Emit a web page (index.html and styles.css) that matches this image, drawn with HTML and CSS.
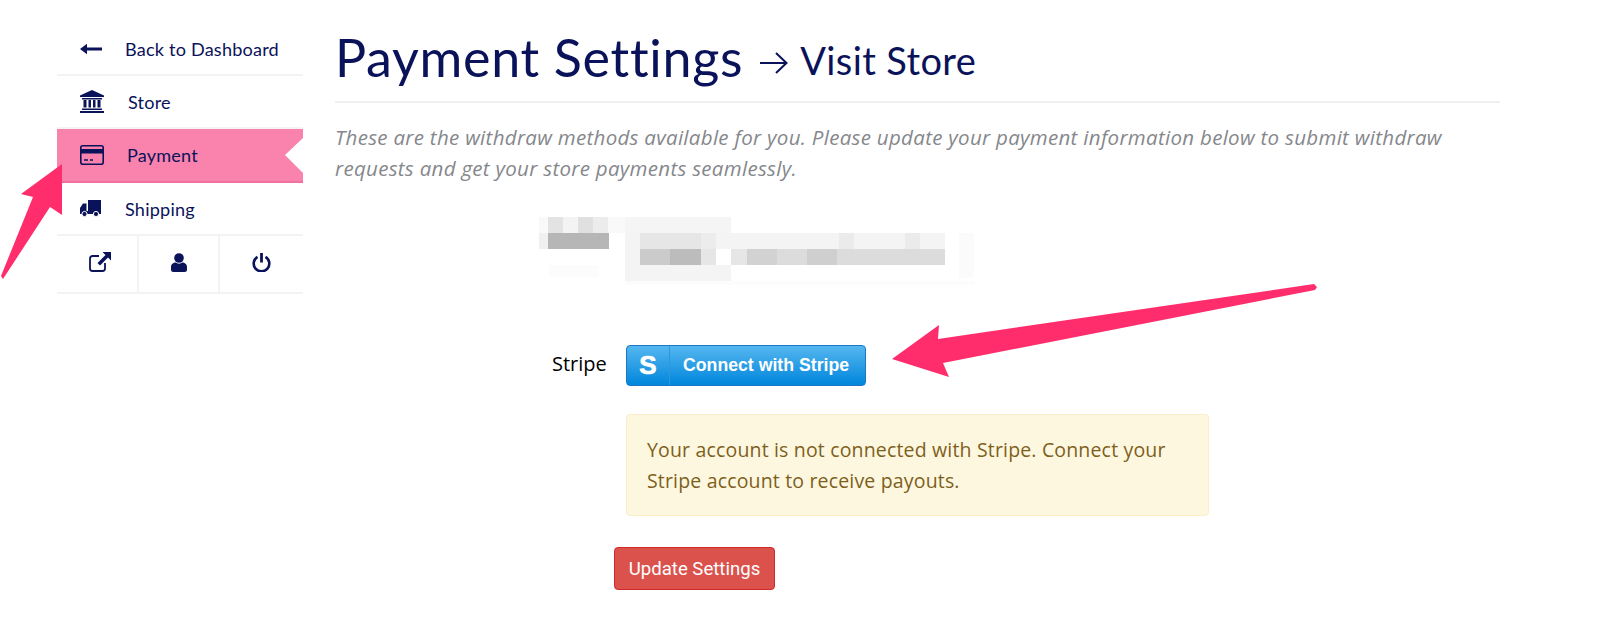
FILE: index.html
```html
<!DOCTYPE html>
<html lang="en">
<head>
<meta charset="utf-8">
<title>Payment Settings</title>
<link rel="stylesheet" href="styles.css">
</head>
<body>
<div class="page">
  <aside class="side">
    <a class="item item-first"><span class="ico"><svg width="22" height="12" viewBox="0 0 22 12"><path d="M0 6 7 .8V4.4H22V7.6H7V11.2Z" fill="#0a1259"/></svg></span><span class="lbl">Back to Dashboard</span></a>
    <a class="item"><span class="ico ico-store"><svg width="24" height="23" viewBox="0 0 24 23"><path d="M12 0 24 5.500V7H0V5.500ZM2 8H22V9.500H2ZM3.500 10H6.500V17.500H3.500ZM8.500 10H11V17.500H8.500ZM13 10H15.500V17.500H13ZM17.500 10H20.500V17.500H17.500ZM2 18.500H22V20H2ZM0 21H24V23H0Z" fill="#0a1259"/></svg></span><span class="lbl">Store</span></a>
    <a class="item item-active"><span class="ico ico-pay"><svg width="24" height="20" viewBox="0 0 24 20"><rect x=".8" y=".8" width="22.400" height="18.400" rx="2" fill="none" stroke="#0a1259" stroke-width="1.600"/><rect x="1" y="4" width="22" height="4.500" fill="#0a1259"/><path d="M4 15H8M10 15H13" stroke="#0a1259" stroke-width="1.300"/></svg></span><span class="lbl">Payment</span></a>
    <a class="item"><span class="ico"><svg width="21" height="17" viewBox="0 0 21 17"><path d="M8 0H21V13.500H8ZM6.500 3.500V11H0V8L3 3.500Z" fill="#0a1259"/><path d="M0 11H21V14H0Z" fill="#0a1259"/><circle cx="4.500" cy="14" r="2.600" fill="#0a1259" stroke="#fff"/><circle cx="16" cy="14" r="2.600" fill="#0a1259" stroke="#fff"/></svg></span><span class="lbl">Shipping</span></a>
    <div class="tools">
      <span class="tool tool-link"><svg width="22" height="20" viewBox="0 0 22 20"><path d="M16 11V16.500A2.500 2.500 0 0 1 13.500 19H3.500A2.500 2.500 0 0 1 1 16.500V6.500A2.500 2.500 0 0 1 3.500 4H10" fill="none" stroke="#0a1259" stroke-width="1.800"/><path d="M13.500 0H22V8.500L19 5.500 11 13.500 8.500 11 16.500 3Z" fill="#0a1259"/></svg></span>
      <span class="tool"><svg width="16" height="19" viewBox="0 0 16 19"><circle cx="8" cy="5" r="4.800" fill="#0a1259"/><path d="M0 16.500V14C0 11 2.500 9.500 4.500 9.500 6.500 11 9.500 11 11.500 9.500 13.500 9.500 16 11 16 14V16.500A2.500 2.500 0 0 1 13.500 19H2.500A2.500 2.500 0 0 1 0 16.500Z" fill="#0a1259"/></svg></span>
      <span class="tool"><svg width="19" height="19" viewBox="0 0 19 19"><path d="M5.500 3.800A7.800 7.800 0 1 0 13.500 3.800" fill="none" stroke="#0a1259" stroke-width="2.600"/><path d="M9.500 0V9.500" stroke="#0a1259" stroke-width="2.800"/></svg></span>
    </div>
  </aside>
  <main class="main">
    <header class="head">
      <h1 class="title">Payment Settings</h1>
      <svg class="visit-arrow" width="28" height="24" viewBox="0 0 28 24"><path d="M0 12H26M16 2 26.500 12 16 22" fill="none" stroke="#0a1259" stroke-width="2"/></svg>
      <a class="visit">Visit Store</a>
    </header>
    <p class="intro">These are the withdraw methods available for you. Please update your payment information below to submit withdraw requests and get your store payments seamlessly.</p>
    <div class="mosaic">
      <svg width="440" height="76" viewBox="0 0 440 76">
        <rect x="0" y="0" width="192" height="16" fill="#f9f9f9"/><rect x="9" y="0" width="15" height="16" fill="#e3e3e3"/><rect x="39" y="0" width="15" height="16" fill="#e0e0e0"/><rect x="24" y="0" width="15" height="16" fill="#f3f3f3"/><rect x="54" y="0" width="15" height="16" fill="#ececec"/><rect x="86" y="0" width="106" height="16" fill="#f5f5f5"/>
        <rect x="0" y="16" width="9" height="16" fill="#f0f0f0"/><rect x="9" y="16" width="61" height="16" fill="#b6b6b6"/>
        <rect x="86" y="16" width="106" height="48" fill="#f4f4f4"/><rect x="101" y="16" width="61" height="16" fill="#e6e6e6"/><rect x="162" y="16" width="15" height="16" fill="#ececec"/><rect x="192" y="16" width="214" height="16" fill="#f4f4f4"/><rect x="300" y="16" width="15" height="16" fill="#ebebeb"/><rect x="366" y="16" width="15" height="16" fill="#ebebeb"/>
        <rect x="101" y="32" width="61" height="16" fill="#cbcbcb"/><rect x="131" y="32" width="31" height="16" fill="#bcbcbc"/><rect x="162" y="32" width="15" height="16" fill="#e6e6e6"/><rect x="177" y="32" width="15" height="16" fill="#ffffff"/>
        <rect x="192" y="32" width="214" height="16" fill="#dcdcdc"/><rect x="192" y="32" width="16" height="16" fill="#e6e6e6"/><rect x="208" y="32" width="30" height="16" fill="#d2d2d2"/><rect x="268" y="32" width="30" height="16" fill="#cfcfcf"/>
        <rect x="10" y="48" width="50" height="12" fill="#fcfcfc"/><rect x="86" y="64" width="350" height="4" fill="#fcfcfc"/><rect x="420" y="16" width="15" height="45" fill="#fbfbfb"/>
      </svg>
    </div>
    <div class="stripe-row">
      <span class="stripe-label">Stripe</span>
      <a class="stripe-btn"><span class="stripe-s">S</span><span class="stripe-text">Connect with Stripe</span></a>
    </div>
    <div class="notice">Your account is not connected with Stripe. Connect your Stripe account to receive payouts.</div>
    <button class="update" type="button">Update Settings</button>
  </main>
</div>
<svg class="arrow-a" width="70" height="125" viewBox="0 155 70 125"><path d="M62 164 21 194 33 197 1 276 3 279 50 207 62 215Z" fill="#ff2d6b"/></svg>
<svg class="arrow-b" width="440" height="110" viewBox="885 275 440 110"><path d="M892 359 939 325 938 339 1314 284 1317 287 1315 290 943 363 949 377Z" fill="#ff2d6b"/></svg>
</body>
</html>
```
FILE: styles.css
```css
* { box-sizing: border-box; }
html, body { margin: 0; padding: 0; background: #fff; }
body { font-family: "Lato", "Liberation Sans", sans-serif; color: #0a1259; overflow: hidden; height: 622px; position: relative; }
.page { display: flex; align-items: flex-start; padding-left: 57px; }

.side { width: 246px; flex: none; padding-top: 24px; }
.item { display: flex; align-items: center; height: 53px; padding-left: 23px; font-size: 18.100px; letter-spacing: .2px; border-bottom: 2px solid #f3f3f3; color: #0a1259; }
.item-first { height: 52px; }
.ico { width: 45px; flex: none; display: flex; align-items: center; }
.ico-store { width: 48px; }
.ico-pay { width: 47px; }
.item-active { height: 54px; background: #f983ad; border-bottom-color: #f0709f; clip-path: polygon(0 0, 100% 0, 100% 9px, 228px 26px, 100% 44px, 100% 100%, 0 100%); }
.tools { display: grid; grid-template-columns: 82px 81px 83px; height: 58px; border-bottom: 2px solid #f3f3f3; }
.tool { display: flex; align-items: center; justify-content: center; border-right: 2px solid #f3f3f3; padding-bottom: 4px; }
.tool-link { padding-left: 6px; }
.tool:last-child { border-right: 0; }

.main { width: 1165px; margin-left: 32px; flex: none; }
.head { display: flex; align-items: baseline; height: 103px; padding-top: 24px; border-bottom: 2px solid #f0f0f0; }
.title { margin: 0; font-size: 52px; line-height: 66px; font-weight: 400; letter-spacing: .7px; color: #0a1259; }
.visit-arrow { flex: none; margin-left: 17px; align-self: flex-start; margin-top: 27px; }
.visit { font-size: 38px; margin-left: 12px; color: #0a1259; letter-spacing: .4px; position: relative; top: -2px; }
.intro { margin: 19px 0 0; width: 1110px; font-family: "Open Sans", sans-serif; font-size: 20.500px; line-height: 31px; letter-spacing: .3px; font-style: italic; color: #85878c; }

.mosaic { margin: 33px 0 0 204px; height: 76px; line-height: 0; }
.stripe-row { display: flex; align-items: center; margin: 52px 0 0 217px; color: #000; }
.stripe-label { width: 74px; font-family: "Open Sans", sans-serif; font-size: 20px; padding-bottom: 5px; }
.stripe-btn { display: flex; align-items: center; width: 240px; height: 41px; border-radius: 4px; background: linear-gradient(#55b6ef, #0086dc); border: 1px solid #1a78c4; color: #fff; font-family: "Liberation Sans", sans-serif; font-weight: 700; }
.stripe-s { width: 43px; flex: none; height: 100%; display: flex; align-items: center; justify-content: center; border-right: 1px solid #2f95dc; font-size: 26px; -webkit-text-stroke: .7px #fff; }
.stripe-text { font-size: 17.700px; margin-left: 13px; }
.notice { margin: 28px 0 0 291px; width: 583px; height: 102px; padding: 19px 20px; background: #fdf7e0; border: 1px solid #fbeec6; border-radius: 4px; color: #7d5f1c; font-family: "Open Sans", sans-serif; font-size: 19.500px; letter-spacing: .17px; line-height: 31px; }
.update { display: block; margin: 31px 0 0 279px; width: 161px; height: 43px; padding: 0; background: #db524d; border: 1px solid #cf2a27; border-radius: 4px; color: #fff; font-family: "Roboto", sans-serif; font-size: 18.600px; }

.arrow-a { position: absolute; left: 0; top: 155px; }
.arrow-b { position: absolute; left: 885px; top: 275px; }
```
